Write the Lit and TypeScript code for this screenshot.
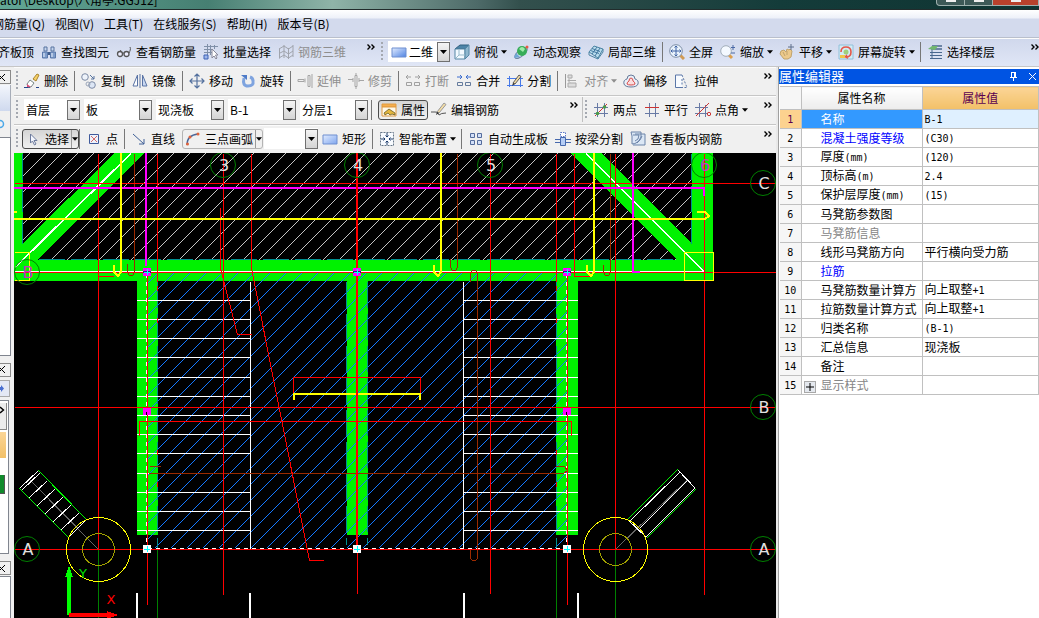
import { LitElement, html, svg, css, nothing, type TemplateResult, type SVGTemplateResult } from "lit";
import { customElement, property, state } from "lit/decorators.js";
import { classMap } from "lit/directives/class-map.js";

/* Toolbar glyphs on a 16 x 16 grid. */
const ICONS: Record<string, SVGTemplateResult> = {
  find: svg`<path d="M3 3h3v4H3zM10 3h3v4h-3z" fill="#c5d5ee" stroke="#56739f"/><path d="M1.500 8h5v6h-5zM9.500 8h5v6h-5z" fill="#7f9dcb" stroke="#5a78aa"/><path d="M7 8h2v3H7z" fill="#3f5c8c"/><path d="M3 9v4M11 9v4" stroke="#eef4ff"/>`,
  glasses: svg`<path d="M5 6L3 9M14 3c1 2 0 4-1 6" fill="none" stroke="#555"/><circle cx="4" cy="10" r="2.500" fill="#eef" stroke="#555" stroke-width="1.300"/><circle cx="10.500" cy="10" r="2.500" fill="#eef" stroke="#555" stroke-width="1.300"/><path d="M6.500 9.500q1-1 1.500 0" fill="none" stroke="#555"/>`,
  batch: svg`<path d="M1 2.500h14M4.500 0v11M1 5.500h9M1 8.500h9M7.500 1v10M11.500 1v4" stroke="#8090a8" fill="none"/><path d="M1 11h4v4H1z" fill="#9db6ea" stroke="#3e62b5"/><path d="M9 5v9l2-2 2 3 1-1-1.500-3H15z" fill="#fff" stroke="#889"/>`,
  rebar3d: svg`<path d="M1.500 4.500v10M6 1v13M10.500 4v11M15 1v12M1 5l5-3 4.500 3L15 2M1 9.500L6 7l4.500 3L15 7M1 14l5-3 4.500 3 4.500-3" stroke="#a0a4ad" fill="none"/>`,
  rect: svg`<path d="M1 4h14v9H1z" fill="url(#blueRect)" stroke="#6f8fd0"/>`,
  cube: svg`<path d="M1 5l5-4h9l-4 4z" fill="#4d84a8" stroke="#316080"/><path d="M1 5h10v10H1z" fill="#f2f9ff" stroke="#5486a5"/><path d="M11 5l4-4v10l-4 4z" fill="#8fb7cf" stroke="#5486a5"/><path d="M2 14l3-3h6M5 11V6" stroke="#9bc" fill="none"/>`,
  orbit: svg`<ellipse cx="8" cy="9" rx="7.500" ry="3" transform="rotate(-40 8 9)" fill="none" stroke="#6f87a5"/><circle cx="9" cy="7" r="5" fill="#36ad59"/><path d="M6 5q3-4 6 0l-2 3z" fill="#9eeaa9"/><path d="M1 14l2-5 4 4z" fill="#6da7d6"/><circle cx="14" cy="3" r="1.500" fill="#e75a42"/>`,
  local3d: svg`<path d="M1 8l5-6 9 3-5 9z" fill="#b9dced" stroke="#4d85a4"/><path d="M4 4.500l8 3M2.500 6.500l8.500 3M9 3L4 10M12 4l-5 8" stroke="#4478a0" fill="none"/><path d="M1 8v3l9 4v-2M10 15l5-7V5" stroke="#4d85a4" fill="none"/>`,
  full: svg`<path d="M11 11l4 4" stroke="#d09a55" stroke-width="3"/><circle cx="7" cy="7" r="6.300" fill="#eaf3fc" stroke="#7c8da5"/><path d="M7 2v10M2 7h10M5.500 3.500L7 2l1.500 1.500M5.500 10.500L7 12l1.500-1.500M3.500 5.500L2 7l1.500 1.500M10.500 5.500L12 7l-1.500 1.500" stroke="#3f62a5" fill="none"/>`,
  zoom: svg`<path d="M9 11l3 3" stroke="#dca04e" stroke-width="3"/><circle cx="6" cy="7" r="5.300" fill="#f4f9ff" stroke="#a2aeba"/><path d="M13 1v5M11 3.500h4M11 9h4" stroke="#4a69a5"/>`,
  pan: svg`<path d="M2 7l3-1 2 2 1-3 2 1 1-1 2 2-1 6-3 2H5l-4-5z" fill="#ecc98b" stroke="#c0a36c"/><path d="M4 8l2 4M8 7v4" stroke="#c0a36c"/><path d="M12 0v6M9 3h6" stroke="#5f6f8b"/>`,
  spin: svg`<path d="M1 1h14v14H1z" fill="#d4ecf5" stroke="#90c0da"/><path d="M3 8q0-5 5-5t5 5-5 5" fill="none" stroke="#e4564a" stroke-width="1.600"/><path d="M9 10l-3 3 4 2z" fill="#e4564a"/><path d="M2 11h5v3H2z" fill="#efc44b"/><circle cx="8" cy="8" r="2.500" fill="#9ed07e"/>`,
  floors: svg`<path d="M5 2h10M4 5h11" stroke="#49688f" stroke-width="1.500"/><path d="M1 5l4-3h6L8 6z" fill="#71b66f"/><path d="M3 8.500h12M3 11.500h12M3 14.500h12M5 6v9" stroke="#49688f" fill="none"/>`,
  erase: svg`<path d="M0 14.500h6M12 14.500h3" stroke="#24438a"/><path d="M9 6l4-5 2 1-3 6z" fill="#f6d067" stroke="#a9852e"/><path d="M6 7l4 3-3 4H4l-1-3z" fill="#fff" stroke="#788"/><path d="M3 11l4 3H3z" fill="#d64f7b"/>`,
  copy: svg`<circle cx="4" cy="4" r="3.300" fill="#eef3fa" stroke="#7d8ba5"/><circle cx="11" cy="12" r="3.300" fill="#dce6f5" stroke="#7d8ba5"/><circle cx="7" cy="11" r="2" fill="none" stroke="#9aa5b8"/><path d="M9 2l4 4M13 3v3h-3" stroke="#56739f" fill="none"/>`,
  mirror: svg`<path d="M5.500 2v11H1z" fill="#fff" stroke="#5a74a5"/><path d="M8 1v14" stroke="#5a74a5"/><path d="M10.500 2v11H15z" fill="#c9d8f2" stroke="#5a74a5"/>`,
  move: svg`<path d="M8 1v14M1 8h14M5.500 3.500L8 1l2.500 2.500M5.500 12.500L8 15l2.500-2.500M3.500 5.500L1 8l2.500 2.500M12.500 5.500L15 8l-2.500 2.500" stroke="#54719e" stroke-width="1.200" fill="none"/>`,
  rotate: svg`<path d="M4 5q-2 8 4 8t5-5q0-3-3-4" fill="none" stroke="#7fa4df" stroke-width="3"/><path d="M1 2h6v5z" fill="#4e7bc8"/>`,
  extend: svg`<path d="M1 6.500h6v2H1zM8 5.500v4M11 2.500h2v11h-2zM15 1v14" stroke="#a5a5a5" fill="none"/>`,
  trim: svg`<path d="M0 6.500h5M5 5v4M7 2.500h2v11H7zM11 5v4M11 7.500h5M8 0v2M8 14v2" stroke="#a5a5a5" fill="none"/>`,
  brk: svg`<path d="M1 4h5M3 2L1 4l2 2M10 4h5M13 2l2 2-2 2M1.500 9.500h5v3h-5zM9.500 9.500h5v3h-5z" stroke="#a0a0a0" fill="none"/>`,
  merge: svg`<path d="M1 4h5M4 2l2 2-2 2M10 4h5M12 2l-2 2 2 2" stroke="#3e6fd0" fill="none"/><path d="M1.500 9.500h5v3h-5zM9.500 9.500h5v3h-5z" stroke="#657b9d" fill="none"/>`,
  split: svg`<path d="M0 5.500h16M0 12.500h16M2.500 3v11M13.500 3v11" stroke="#4779e8"/><path d="M6 10l6-8 2 1.500L8 11z" fill="#f4dda5" stroke="#5a5a5a"/><path d="M6 10l-1 3 3-2z" fill="#333"/>`,
  align: svg`<path d="M1.500 1v14" stroke="#999"/><path d="M4 2h4v3H4zM4 10h8v4H4z" fill="#ddd" stroke="#aaa"/><path d="M4 7.500h8M6 5.500L4 7.500l2 2" stroke="#aaa" fill="none"/>`,
  offset: svg`<path d="M1 11q-1-4 3-5 0-4 4-4t4 4q4 1 3 5-1 3-7 3t-7-3z" fill="#eaf0f8" stroke="#667a99"/><path d="M4 11q0-2 2-3 0-3 2-3t2 3q2 1 2 3-1 1-4 1t-4-1z" fill="#fbdede" stroke="#d94c4c"/>`,
  stretch: svg`<path d="M8 2H1.500v12.500H8" stroke="#5a77a8" fill="#f8fbff"/><path d="M8 2l5 12.500H8M8 6v7" stroke="#5a77a8" stroke-dasharray="2 1.500" fill="none"/>`,
  props: svg`<path d="M1 2h14v3H1z" fill="#f6ae4d" stroke="#e09a40"/><path d="M1 5h14v9H1z" fill="#fff8e8" stroke="#e09a40"/><path d="M3 11l5-4 6 4v2l-3-1-2 1-2-2-3 2z" fill="#e4b73e" stroke="#6a5a24" stroke-width=".8"/>`,
  edit: svg`<path d="M0 10h4q3-1 4 3 2-2 7-2" stroke="#555" fill="none"/><path d="M6 10l7-9 2 1.500L8 11z" fill="#f4dda5" stroke="#999"/><path d="M6 10l-1 3 3-2z" fill="#222"/>`,
  twoPt: svg`<path d="M4.500 1v14M11.500 1v14M1 5.500h14M1 11.500h14" stroke="#687aa5"/><path d="M2 14L14 2" stroke="#c33"/><circle cx="4.500" cy="11.500" r="1.800" fill="#4a9a4a"/><circle cx="11.500" cy="5" r="1.800" fill="#4a9a4a"/>`,
  parallel: svg`<path d="M5.500 1v14M11.500 1v14" stroke="#687aa5"/><path d="M1 5.500h14" stroke="#c33"/><path d="M1 11.500h14" stroke="#687aa5"/>`,
  ptAngle: svg`<path d="M4.500 1v14M10.500 3v12M0 5.500h13M0 11.500h13" stroke="#687aa5"/><path d="M1 14L14 1" stroke="#c33"/><circle cx="14" cy="12" r="1.700" fill="none" stroke="#c33"/>`,
  cursor: svg`<path d="M5.500 3v9l2-2 2 4 1.500-1-2-3.500H12z" fill="#f4f7ff" stroke="#6d7b9d"/>`,
  point: svg`<path d="M3.500 3.500h9v9h-9z" fill="#eef2fb" stroke="#3f5a9c"/><path d="M5 5l6 6M11 5l-6 6" stroke="#d36a6a"/>`,
  line: svg`<path d="M2 3l11 10M13 8v5H8" stroke="#3e5f96" fill="none"/>`,
  arc: svg`<path d="M2 14Q2 4 13 3" fill="none" stroke="#4a6698" stroke-width="1.500"/><circle cx="2.500" cy="13" r="1.500" fill="#e0633c"/><circle cx="5" cy="6" r="1.500" fill="#e0633c"/><circle cx="13" cy="3" r="1.500" fill="#e0633c"/>`,
  smart: svg`<path d="M1.500 1.500h13v13h-13z" fill="#f8fbff" stroke="#678" stroke-dasharray="2 1"/><path d="M8 2v4M8 10v4M2 8h4M10 8h4M6.500 4.500L8 6l1.500-1.500M6.500 11.500L8 10l1.500 1.500M4.500 6.500L6 8l-1.500 1.500M11.500 6.500L10 8l1.500 1.500" stroke="#1d3c6b" fill="none"/>`,
  autoSlab: svg`<path d="M2.500 2.500h4v4h-4zM9.500 2.500h4v4h-4zM2.500 9.500h4v4h-4zM9.500 9.500h4v4h-4z" fill="#d3e0f8" stroke="#556c9c"/>`,
  beam: svg`<path d="M5.500 1.500h5v4h-5z" fill="#fff" stroke="#5a77c8" stroke-dasharray="1.500 1"/><path d="M0 8.500h16M0 11.500h16" stroke="#4668ad"/><path d="M5.500 6.500h5v8h-5z" fill="#b5cdf5" stroke="#4668ad"/>`,
  viewSlab: svg`<path d="M1 1h10v5q-3 7-9 7V5zM5 3h10v11H3" fill="#dbe7f5" stroke="#6b83a8"/><path d="M3 4h6q0 5-4 6M7 12q4-3 5-7" stroke="#6b83a8" fill="none"/>`,
};

const caret = html`<svg class="caret" viewBox="0 0 7 4" aria-hidden="true"><path d="M0 0h7L3.500 4z" fill="currentColor" /></svg>`;
const more = html`<button class="more" aria-label="更多"><svg viewBox="0 0 8 6" aria-hidden="true"><path d="M.5.5L3 3 .5 5.500M4.500.5L7 3 4.500 5.500" fill="none" stroke="#000" stroke-width="1.400" /></svg></button>`;

const shared = css`
  button, select { font: inherit; color: inherit; margin: 0; padding: 0; border: 0; background: none; border-radius: 0; }
  svg { display: block; flex: none; }
`;

/* Splits a label so that Latin runs are set in the narrow monospace face. */
const mixed = (s: string) =>
  s.split(/([\x21-\x7e]+)/).filter(Boolean).map((p) => (/^[\x21-\x7e]/.test(p) ? html`<span class="latin">${p}</span>` : p));

@customElement("tool-button")
class ToolButton extends LitElement {
  @property() icon = "";
  @property() label = "";
  @property({ type: Boolean }) drop = false;
  @property({ type: Boolean, reflect: true }) off = false;
  @property() frame?: string;
  static styles = [shared, css`
    :host { display: flex; flex: none; margin-right: 7px; }
    :host([drop]) { margin-right: 6px; }
    :host([frame]) { margin-right: 3px; }
    :host([frame][drop]) { margin-right: 1px; }
    button { display: flex; align-items: center; gap: 4px; height: 20px; line-height: 18px; white-space: nowrap; }
    :host([off]) button { color: #8e8e8e; }
    .icon { width: 16px; height: 16px; }
    .caret { width: 6px; height: 4px; margin-left: -1px; }
    :host([frame]) button { border: 1px solid #b4b4b4; border-radius: 3px; padding: 0 2px; }
    :host([frame][drop]) button { padding-right: 0; }
    :host([frame="on"]) button { border-color: #4c4c4c; background: linear-gradient(#d5d5d5, #f1f1f1); }
    .split { display: flex; align-items: center; height: 18px; margin-left: -2px; border-left: 1px solid #9a9a9a; }
    .split .caret { margin: 0; }
  `];
  render() {
    const arrow = this.frame ? html`<span class="split">${caret}</span>` : caret;
    return html`<button ?disabled=${this.off}>
      <svg class="icon" viewBox="0 0 16 16" aria-hidden="true">
        <defs><linearGradient id="blueRect" x2="1" y2="1"><stop stop-color="#e2ecff" /><stop offset="1" stop-color="#7fa6ee" /></linearGradient></defs>
        ${ICONS[this.icon]}
      </svg>
      <span>${this.label}</span>${this.drop ? arrow : ""}
    </button>`;
  }
}

@customElement("tool-combo")
class ToolCombo extends LitElement {
  @property() value = "";
  @property() name = "";
  @property() size = "";
  @property() icon = "";
  static styles = [shared, css`
    :host { display: flex; flex: none; margin-right: 4px; }
    .box { display: flex; align-items: center; width: 68px; height: 21px; background: #fff; box-sizing: border-box; }
    .small { width: 56px; }
    .mid { width: 54px; }
    .icon { width: 16px; height: 16px; margin-left: 3px; }
    select { appearance: none; flex: 1; min-width: 0; height: 20px; padding-left: 2px; line-height: 18px; outline: none; }
    .view { width: 62px; }
    .arrow { display: flex; align-items: center; justify-content: center; width: 13px; height: 20px; box-sizing: border-box; border: 1px solid #707070; background: linear-gradient(#f4f4f4, #d4d4d4); color: #000; }
    .caret { width: 7px; height: 4px; }
  `];
  render() {
    const cls = { box: true, small: this.size === "small", mid: this.size === "mid", view: this.size === "view" };
    return html`<div class=${classMap(cls)}>
      ${this.icon ? html`<svg class="icon" viewBox="0 0 16 16" aria-hidden="true"><defs><linearGradient id="blueRect" x2="1" y2="1"><stop stop-color="#e2ecff" /><stop offset="1" stop-color="#4f83e2" /></linearGradient></defs>${ICONS[this.icon]}</svg>` : ""}
      <select aria-label=${this.name}><option>${this.value}</option></select>
      <span class="arrow">${caret}</span>
    </div>`;
  }
}

type Pt = [number, number];
const seg = (pts: Pt[]) => pts.map((p) => p.join(",")).join(" ");
const STEPS = [300, 319, 338, 357, 377, 396, 415, 434, 453, 473, 492, 511, 530];
const BUBBLES: [number, number, string, boolean][] = [
  [223, 165, "3", false], [357, 165, "4", false], [490, 165, "5", false], [704, 165, "6", true],
  [763, 183, "C", false], [763, 407, "B", false], [763, 549, "A", false], [27, 549, "A", false], [27, 272, "B", true],
];
const HOOKS: Pt[] = [[121, 272], [441, 272], [594, 272]];

@customElement("plan-canvas")
class PlanCanvas extends LitElement {
  static styles = css`
    :host { display: block; background: #000; overflow: hidden; }
    svg { display: block; width: 100%; height: 100%; }
    .g { fill: #00f200; }
    .lines { fill: none; stroke-width: 1; }
    .th { stroke-width: 2; }
    .r { stroke: #ff0000; }
    .w { stroke: #fff; }
    .y { stroke: #ffff00; }
    .m { stroke: #ff00ff; }
    .b { stroke: #9b2a00; }
    .dk { stroke: #008000; }
    .teal { stroke: #009090; stroke-dasharray: 26 6; }
    .dash { stroke: #fff; stroke-dasharray: 4 4; }
    .label { font: 16px "DejaVu Sans", sans-serif; fill: #e0e0e0; text-anchor: middle; }
    .hot { fill: #c832c8; }
    .axis { font: 13px "DejaVu Sans", sans-serif; text-anchor: middle; }
  `;
  render() {
    const left: Pt[] = [[29, 497], [37, 505], [45, 513], [53, 521], [61, 529]];
    return html`<svg role="img" aria-label="板平面图">
      <defs>
        <pattern id="gray" width="16" height="16" patternUnits="userSpaceOnUse" x="7"><path d="M-1 17L17-1" stroke="#c4c4c4" shape-rendering="crispEdges" /></pattern>
        <pattern id="blue" width="16" height="16" patternUnits="userSpaceOnUse" x="15"><path d="M-1 17L17-1" stroke="#1478ff" shape-rendering="crispEdges" /></pattern>
      </defs>
      <g transform="translate(-14 -153)" shape-rendering="crispEdges">
        <rect x="23" y="153" width="669" height="107" fill="url(#gray)" />
        <g class="g">
          <path d="M14 153h9v90L115 153h29L38 260h639L571 153h30l91 91v-91h21v128H14z" />
          <path d="M137 281h21v254h-21zM347 281h21v254h-21zM556 281h22v254h-22z" />
        </g>
        <path d="M147 272H567V548H147z" fill="url(#blue)" />
        <g class="lines" transform="translate(.5 .5)">
          <path class="teal" d="M22 153v90M38 259h639M346 281v263M367 281v263M157 281v267M556 281v267M691 153v90" />
          <path class="w" d="M14 271h690M130 153L14 267M586 153l118 118M704 153v118M250 281v267M463 281v267" />
          <path class="w" d="M130 154L14 268M586 154l118 118" />
          ${STEPS.map((y) => svg`<path class="w" d="M136 ${y}H250M463 ${y}H577" />`)}
          <path class="dash" d="M146 273v275M147 548h420M566 273v275" />
          <path class="b" d="M134 153v119l-2 3h-3l-2-3v-9M610 153v119l-2 3h-3l-2-3v-8M457 153v114l-2 3h-3l-2-3v-9M470 281v-8l2-3h3l2 3v285l-2 2h-3l-2-2v-9M160 466h-11M148 473h415l4-3-3-4h-9" />
          <path class="r" d="M14 183h762M14 272h762M14 407h762M14 549h762M139 435v-14h432v14" />
          <path class="r" d="M98 153v396M223 153v441M490 153v440M147 275v329M567 275v329M615 153v396M704 153v441M357 545v48M157 153v128M556 153v128M574 153v123h15M98 276h15M293 392v-15h127v15" />
          <path class="r" d="M157 285v60M157 449v60M556 285v60M556 449v60" stroke-dasharray="5 27" />
          <polyline class="r" points=${seg([[251, 153], [251, 268], [309, 560], [323, 560]])} />
          <polyline class="r" points=${seg([[220, 207], [220, 268], [237, 334], [251, 334]])} />
          <path class="dk" d="M98 549v69M157 549v69M556 549v69M615 549v69" />
          <path class="y" d="M14 252h15v28H14M684 252h29v28h-29z" />
          <path d="M30 480l68 69M615 549l72-70" stroke="#666" />
          <path class="w" d="M19 488l19-18M21 490l19-18M68 537l18-18M677 469l18 19M627 519l19 18M679 472l-50 49M687 480l-49 49M694 488l-49 49" />
          ${left.map(([x, y]) => svg`<path class="w" d="M${x} ${y}l18-17" />`)}
          <path d="M38 470l48 49M19 488l49 49M677 469l-50 50M695 489l-49 49" stroke="#00f200" />
          ${[98, 615].map((x) => svg`<circle class="y" cx=${x} cy="549" r="32" /><circle cx=${x} cy="549" r="16" stroke="#a0a000" />`)}
        </g>
        <g class="lines">
          <path class="m th" d="M14 188h690v8M146 153v113M633 153v119h7" />
          <path class="y th" d="M14 219h691M294 400v-6h126v6M14 212h3M697 212h8l4 4-4 3" />
          ${HOOKS.map(([x, y]) => svg`<path class="y th" d="M${x} 153V${y}l-3 4-4-4v-7" />`)}
          <path class="r th" d="M357 153v392" />
          <path class="w th" d="M137 593v25M250 593v25M464 593v25M578 593v25" />
        </g>
        ${[147, 357, 567].map((x) => svg`
          <rect x=${x - 4} y="268" width="8" height="8" fill="#f0f" /><path d="M${x - 4} 271h8v2h-8z" fill="#203060" /><path d="M${x - 3} 272h6M${x} 269v6" stroke="#0ff" />
          <rect x=${x - 4} y="545" width="8" height="8" fill="#fff" /><path d="M${x - 3} 549.500h6M${x + 0.5} 546v6" stroke="#0ff" />`)}
        ${[147, 567].map((x) => svg`<rect x=${x - 4} y="408" width="8" height="7" fill="#f0f" /><path d="M${x - 1} 412h1v3h-1z" />`)}
        <path d="M67 615V577h-2l4-11 4 11h-2v38z" fill="#0f0" />
        <path d="M69 613h38v-2l11 4-11 4v-2H69z" fill="#f00" />
      </g>
      <g transform="translate(-14 -153)">
        ${BUBBLES.map(([x, y, t, hot]) => svg`<circle cx=${x} cy=${y} r="12.500" fill="none" stroke="#008000" /><text class=${hot ? "label hot" : "label"} x=${x + 1} y=${y + 6}>${t}</text>`)}
        <text class="axis" x="83" y="578" fill="#00e000">Y</text>
        <text class="axis" x="111" y="604" fill="#ff0000">X</text>
      </g>
    </svg>`;
  }
}

const ROWS: [string, string, string][] = [
  ["名称", "B-1", "sel"], ["混凝土强度等级", "(C30)", "link"], ["厚度(mm)", "(120)", ""], ["顶标高(m)", "2.4", ""],
  ["保护层厚度(mm)", "(15)", ""], ["马凳筋参数图", "", ""], ["马凳筋信息", "", "dim"], ["线形马凳筋方向", "平行横向受力筋", ""],
  ["拉筋", "", "link"], ["马凳筋数量计算方", "向上取整+1", ""], ["拉筋数量计算方式", "向上取整+1", ""], ["归类名称", "(B-1)", ""],
  ["汇总信息", "现浇板", ""], ["备注", "", ""], ["显示样式", "", "dim group"],
];

@customElement("property-editor")
class PropertyEditor extends LitElement {
  @state() open = false;
  static styles = [shared, css`
    :host { display: block; background: #fff; border-left: 1px solid #a0a0a0; overflow: hidden; padding-top: 2px; }
    header { display: flex; align-items: center; height: 15px; margin-bottom: 2px; background: #0054e3; color: #fff; font-size: 13px; line-height: 13px; }
    h2 { flex: 1; margin: 0; padding-bottom: 2px; font: inherit; }
    header svg { width: 9px; height: 9px; margin: 0 5px; }
    header button + button svg { margin-right: 2px; }
    table { width: calc(100% - 1px); margin-left: 1px; border-collapse: collapse; table-layout: fixed; }
    .cn { width: 21px; } .ck { width: 121px; }
    th, td { height: 18px; padding: 0; border: 1px solid #c0c0c0; line-height: 16px; font-weight: normal; text-align: left; white-space: nowrap; overflow: hidden; }
    th:first-child { border-left: 0; text-align: center; background: #f6f6f6; }
    thead th { height: 22px; text-align: center; background: linear-gradient(#fff, #ececec); }
    thead .val { background: linear-gradient(#fbd596, #f2c068); color: #5a0050; }
    .key { padding-left: 19px; }
    .value { padding-left: 2px; }
    .latin { font: 10px/16px "DejaVu Sans Mono", monospace; }
    .sel .key { background: #3399ff; color: #fff; }
    .sel .value { background: #dff0ff; }
    .sel th { background: #fcd28f; color: #5a0050; }
    .link .key { color: #0000ff; }
    .dim .key { color: #868686; }
    .group .key { padding-left: 2px; }
    .plus { width: 12px; height: 12px; margin-right: 5px; padding: 1px; border: 1px solid #a8a8a8; background: #e4e8ee; vertical-align: -1px; box-sizing: border-box; }
  `];
  render() {
    return html`<header><h2>属性编辑器</h2>
        <button aria-label="固定"><svg viewBox="0 0 9 9"><path d="M2.500 0v5M6.500 0v5M2 .5h5M5.500 0v5M1 5.500h7M4.500 6v3" fill="none" stroke="#fff" /></svg></button>
        <button aria-label="关闭"><svg viewBox="0 0 9 9"><path d="M1 1l7 7M8 1L1 8" stroke="#fff" /></svg></button></header>
      <table>
        <colgroup><col class="cn" /><col class="ck" /><col /></colgroup>
        <thead><tr><th></th><th scope="col">属性名称</th><th scope="col" class="val">属性值</th></tr></thead>
        <tbody>${ROWS.map(([k, v, c], i) => html`<tr class=${c}><th scope="row"><span class="latin">${i + 1}</span></th>
          <td class="key">${c.includes("group") ? html`<button class="plus" aria-label="展开" aria-expanded=${this.open} @click=${() => (this.open = !this.open)}><svg viewBox="0 0 8 8"><path d="M4 0v8M0 4h8" stroke="#000" /></svg></button>` : ""}${mixed(k)}</td>
          <td class="value">${mixed(v)}</td></tr>`)}</tbody>
      </table>`;
  }
}

const sep = html`<span class="sep"></span>`;
const grip = html`<span class="grip"></span>`;
const tool = (icon: string, label: string, o: { drop?: boolean; off?: boolean; frame?: string } = {}): TemplateResult =>
  html`<tool-button icon=${icon} label=${label} ?drop=${!!o.drop} ?off=${!!o.off} frame=${o.frame ?? nothing}></tool-button>`;
const DROP = { drop: true };
const OFF = { off: true };

@customElement("app-root")
class AppRoot extends LitElement {
  static styles = [shared, css`
    :host { display: flex; flex-direction: column; height: 100vh; overflow: hidden; background: #f0f0f0; color: #000; font: 12px/16px "Noto Sans CJK SC", sans-serif; }
    .title { display: flex; justify-content: space-between; flex: none; height: 10px; overflow: hidden; background: linear-gradient(90deg, #62a896, #467f72 20%, #8fb4a8 32%, #4d6a68 46%, #33504d 50%, #143c3a 75%, #0f3432); border-bottom: 1px solid #222c2c; box-sizing: border-box; }
    .title h1 { margin: -8px 0 0; font: inherit; }
    .win { display: flex; width: 103px; height: 6px; }
    .win button { flex: 3; border: 1px solid #9fb0ae; border-top: 0; border-radius: 0 0 0 4px; background: #3d5957; }
    .win .max { border-left: 0; border-radius: 0; }
    .win .close { flex: 5; background: #b8412c; border-left: 0; border-radius: 0; }
    .win svg { width: 10px; height: 2px; margin: 0 auto 3px; }
    nav { display: flex; gap: 10px; flex: none; height: 28px; padding-top: 1px; box-sizing: border-box; background: linear-gradient(#fff, #eef1f9 8px, #d3daed 9px); border-bottom: 1px solid #b9bfcc; }
    nav button { flex: none; white-space: nowrap; }
    nav .cut { margin-left: -8px; }
    .bar { display: flex; align-items: center; box-sizing: border-box; min-width: 0; overflow: hidden; padding-bottom: 2px; background: #f0f0f0; border-top: 1px solid #fcfcfc; border-bottom: 1px solid #c6c6c6; }
    .view { flex: none; height: 29px; background: linear-gradient(#d0d8ec, #e0e6f6); }
    .cutwrap { display: flex; margin-left: -34px; }
    .sep { flex: none; width: 1px; height: 20px; margin: 0 6px 0 -1px; background: #777; }
    .grip { flex: none; width: 2px; height: 20px; margin: 0 6px 0 2px; background: repeating-linear-gradient(#a4a8b0 0 2px, transparent 2px 4px); }
    .more { flex: none; align-self: flex-start; width: 8px; height: 6px; margin: 5px 4px 0 auto; }
    .more svg { width: 8px; height: 6px; }
    .view > .more { margin-right: 0; }
    .group { display: flex; align-items: center; align-self: stretch; flex: none; }
    .find { width: 379px; }
    .view .grip { margin-right: 5px; }
    .last .grip { margin-right: 4px; }
    .main { display: flex; flex: 1; min-height: 0; }
    .dock { display: flex; flex-direction: column; flex: none; width: 14px; }
    .center { display: flex; flex-direction: column; flex: 1; min-width: 0; border-right: 2px solid #e9e9e9; }
    .center .bar { height: 29px; flex: none; }
    .center .last { height: 28px; border-bottom: 0; }
    .prop { width: 568px; }
    .axisbar { flex: 1; border-left: 1px solid #c0c0c0; }
    plan-canvas { flex: 1; min-height: 0; }
    property-editor { flex: none; width: 261px; box-sizing: border-box; }
    .x { flex: none; width: 11px; height: 14px; margin: 3px 0 0; box-sizing: border-box; border: 1px solid #8a8a8a; border-left: 0; }
    .x svg { width: 7px; height: 9px; }
    .pane { flex: none; width: 11px; box-sizing: border-box; border: 1px solid #80858f; border-left: 0; background: #fff; overflow: hidden; }
    .tabs { flex: none; width: 11px; height: 26px; margin-top: 1px; background: linear-gradient(#f3f6fc, #cfd9ee); border-right: 1px solid #a7adb8; box-sizing: border-box; }
    .ring { flex: none; width: 11px; height: 26px; border-right: 1px solid #a7adb8; box-sizing: border-box; padding-top: 8px; }
    .ring svg { width: 5px; height: 10px; }
    .tree { flex: 219; }
    .nav2 { height: 17px; margin-top: 3px; flex: none; width: 10px; border: 1px solid #a9a9a9; border-left: 0; box-sizing: border-box; background: #e4e8f4; }
    .nav2 svg { width: 5px; height: 9px; }
    .list { flex: 154; width: 9px; margin-top: 3px; display: flex; flex-direction: column; }
    .cell { height: 26px; flex: none; width: 6px; border-right: 1px solid #888; border-bottom: 1px solid #888; background: #ececec; margin-top: 2px; }
    .cell svg { width: 5px; height: 9px; margin-top: 3px; }
    .gold { background: linear-gradient(#fbd596, #f2c068); border-color: #fff; }
    .green { height: 18px; margin-top: 16px; width: 4px; background: #108a2c; border-color: #555; }
    .log { flex: 41; margin-top: 1px; border-bottom: 0; }
    .gap { margin-top: 7px; }
  `];
  render() {
    const x = html`<svg viewBox="0 0 7 9" aria-hidden="true"><path d="M-2 1l7 7M5 1l-7 7" stroke="#000" /></svg>`;
    const bar = html`<svg viewBox="0 0 10 2" aria-hidden="true"><path d="M0 1h10" stroke="#eee" stroke-width="2" /></svg>`;
    return html`
      <div class="title"><h1>ator\\Desktop\\八角亭.GGJ12]</h1>
        <div class="win"><button aria-label="最小化">${bar}</button><button class="max" aria-label="最大化">${bar}</button><button class="close" aria-label="关闭">${bar}</button></div></div>
      <nav><button class="cut">钢筋量(Q)</button><button>视图(V)</button><button>工具(T)</button><button>在线服务(S)</button><button>帮助(H)</button><button>版本号(B)</button></nav>
      <div class="bar view">
        <div class="group find"><div class="cutwrap">${tool("rect", "对齐板顶")}</div>
          ${tool("find", "查找图元")}${tool("glasses", "查看钢筋量")}${tool("batch", "批量选择")}${tool("rebar3d", "钢筋三维", OFF)}${more}</div>
        ${grip}<tool-combo name="视图" value="二维" size="view" icon="rect"></tool-combo>
        ${tool("cube", "俯视", DROP)}${tool("orbit", "动态观察")}${tool("local3d", "局部三维")}${sep}
        ${tool("full", "全屏")}${tool("zoom", "缩放", DROP)}${tool("pan", "平移", DROP)}${tool("spin", "屏幕旋转", DROP)}${sep}
        ${tool("floors", "选择楼层")}${more}
      </div>
      <div class="main">
        <aside class="dock">
          <button class="x" aria-label="关闭">${x}</button>
          <div class="tabs"></div>
          <div class="ring"><svg viewBox="0 0 5 10"><circle cx="0" cy="5" r="3.500" fill="none" stroke="#4aa8e8" stroke-width="1.500" /></svg></div>
          <div class="pane tree"></div>
          <button class="x gap" aria-label="关闭">${x}</button>
          <button class="nav2" aria-label="前进"><svg viewBox="0 0 5 9"><path d="M0 3h1V1l3 3.500L1 8V6H0z" fill="#4a6fd0" /></svg></button>
          <div class="pane list"><div class="cell"><svg viewBox="0 0 5 9" aria-hidden="true"><path d="M0 1l3.500 3L0 7" fill="none" stroke="#000" stroke-width="1.400" /></svg></div><div class="cell gold"></div><div class="cell green"></div></div>
          <button class="x gap" aria-label="关闭">${x}</button>
          <div class="pane log"></div>
        </aside>
        <main class="center">
          <div class="bar">${grip}${tool("erase", "删除")}${sep}${tool("copy", "复制")}${tool("mirror", "镜像")}${sep}${tool("move", "移动")}${tool("rotate", "旋转")}${sep}${tool("extend", "延伸", OFF)}${tool("trim", "修剪", OFF)}${sep}${tool("brk", "打断", OFF)}${tool("merge", "合并")}${tool("split", "分割")}${sep}${tool("align", "对齐", { drop: true, off: true })}${tool("offset", "偏移")}${tool("stretch", "拉伸")}${more}</div>
          <div class="bar">
            <div class="group prop">${grip}<tool-combo name="楼层" value="首层" size="small"></tool-combo><tool-combo name="构件类型" value="板"></tool-combo><tool-combo name="构件种类" value="现浇板"></tool-combo><tool-combo name="构件" value="B-1"></tool-combo><tool-combo name="分层" value="分层1"></tool-combo>
              ${sep}${tool("props", "属性", { frame: "on" })}${tool("edit", "编辑钢筋")}${more}</div>
            <div class="group axisbar">${grip}${tool("twoPt", "两点")}${tool("parallel", "平行")}${tool("ptAngle", "点角", DROP)}${more}</div>
          </div>
          <div class="bar last">${grip}${tool("cursor", "选择", { frame: "on", drop: true })}${sep}${tool("point", "点")}${sep}${tool("line", "直线")}${tool("arc", "三点画弧", { frame: "soft", drop: true })}<tool-combo name="参数" value="" size="mid"></tool-combo>${tool("rect", "矩形")}${sep}${tool("smart", "智能布置", DROP)}${sep}${tool("autoSlab", "自动生成板")}${tool("beam", "按梁分割")}${tool("viewSlab", "查看板内钢筋")}${more}</div>
          <plan-canvas></plan-canvas>
        </main>
        <property-editor></property-editor>
      </div>`;
  }
}
